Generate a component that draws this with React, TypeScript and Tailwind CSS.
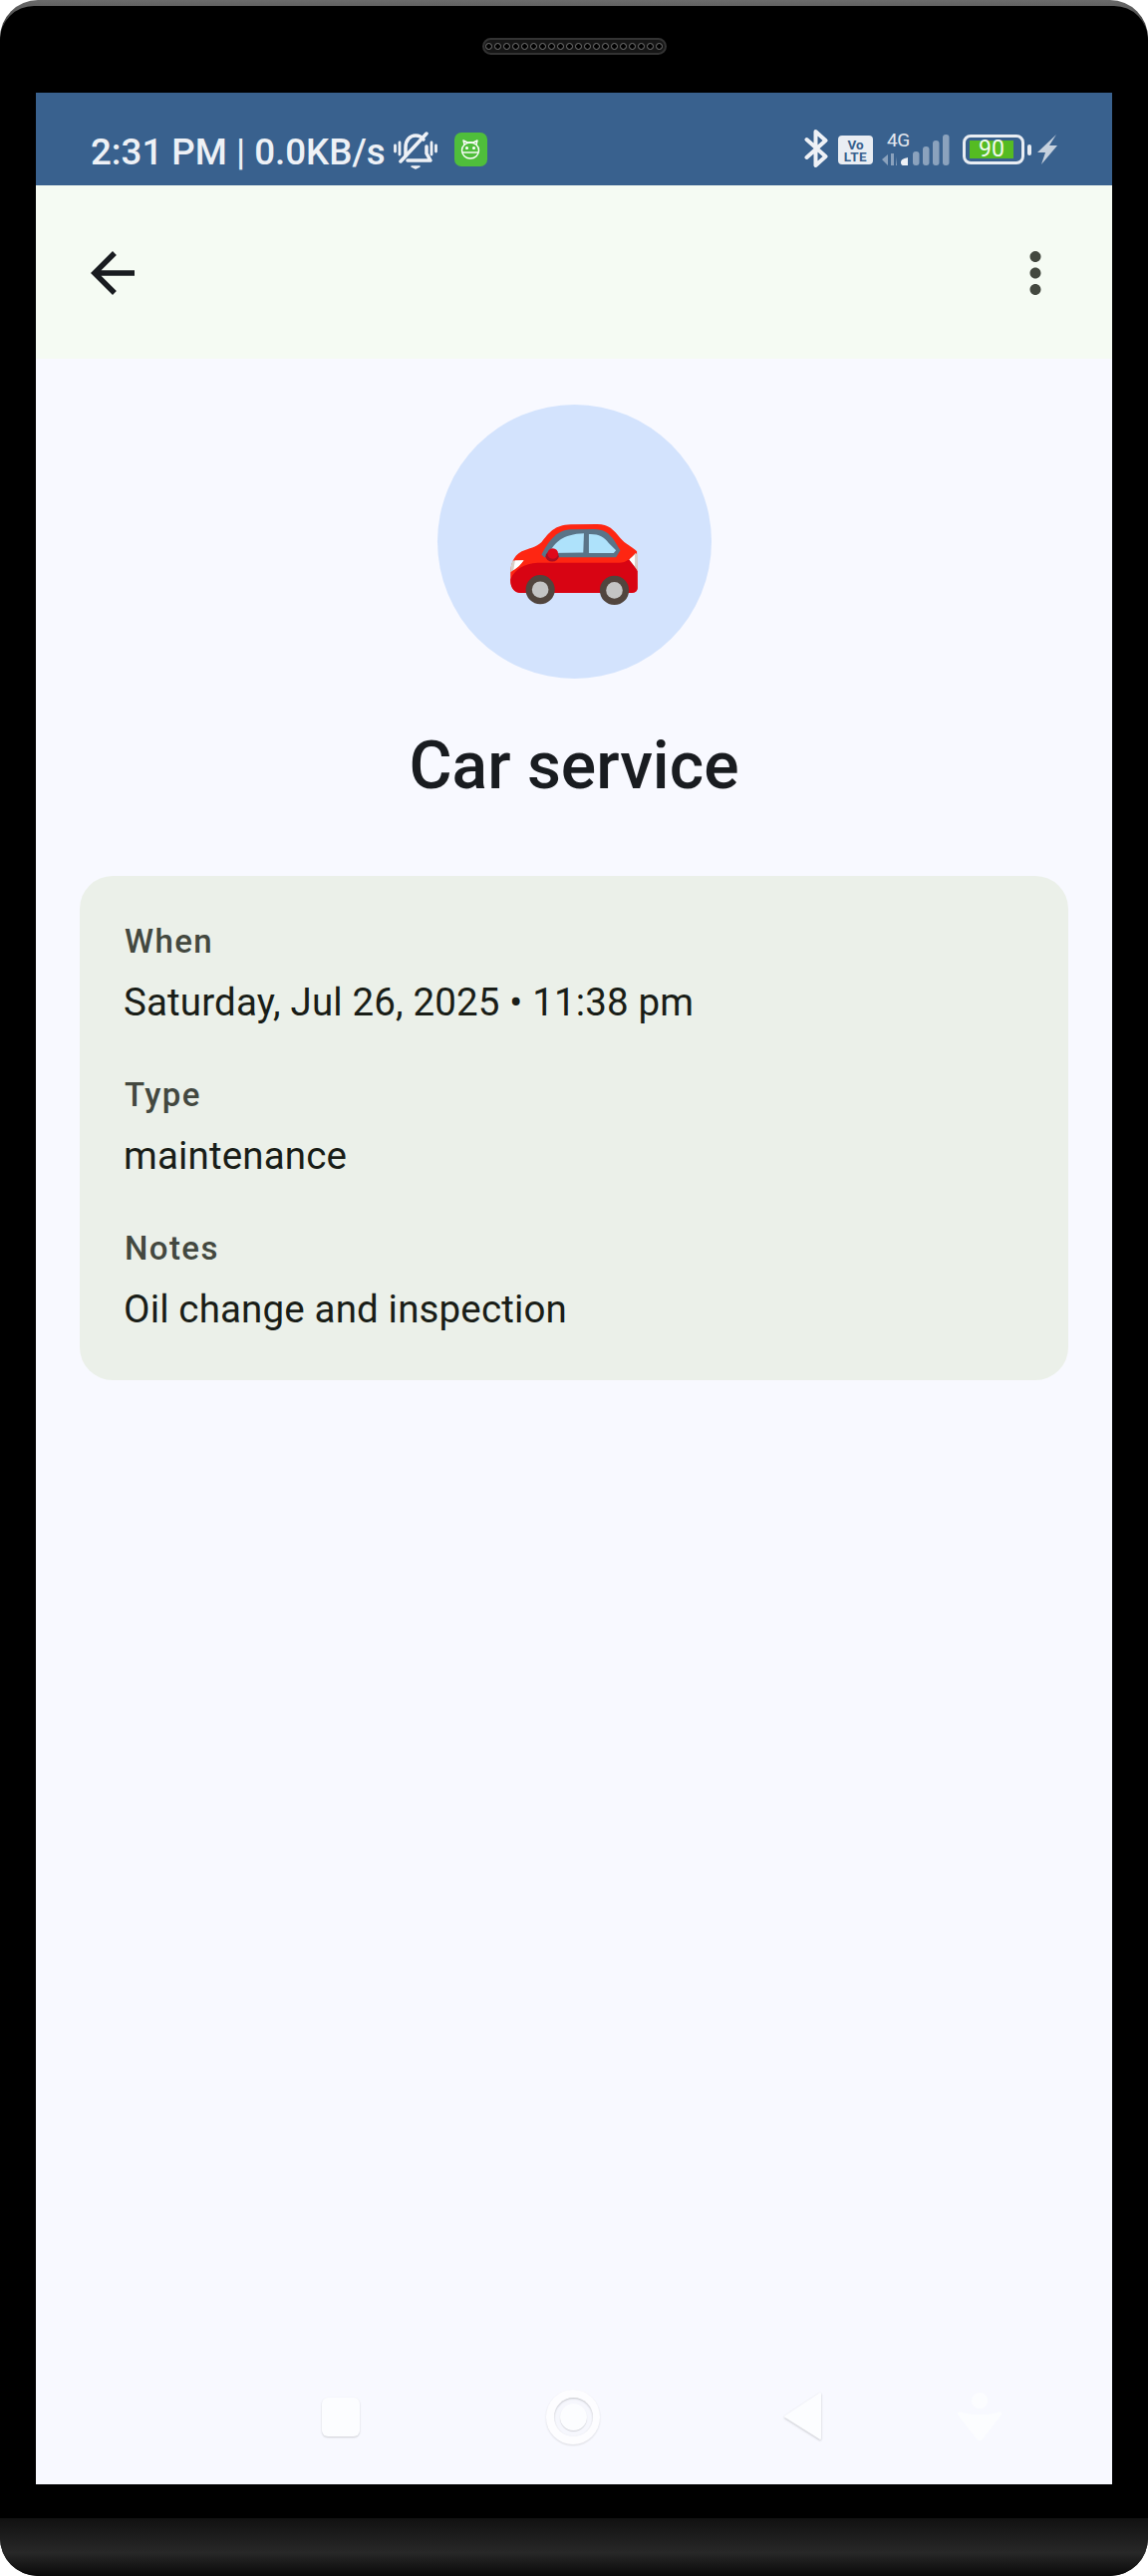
import React from 'react';

const Speaker = () => (
  <div className="flex h-[17px] w-[185px] items-center justify-center gap-[1.5px] rounded-full border-2 border-[#333] bg-[#161616]">
    {Array.from({ length: 20 }).map((_, i) => (
      <span key={i} className="h-[7.5px] w-[7.5px] rounded-full border border-[#777] bg-black" />
    ))}
  </div>
);

const MutedBell = () => (
  <svg width="44" height="38" viewBox="0 0 44 38" fill="none" stroke="#eef1f6" strokeLinecap="round" strokeLinejoin="round" className="mt-[2px]">
    <path d="M12 24 V16 C12 8 17 4 22 4 C25 4 28 5 30 8" strokeWidth="3.5" />
    <path d="M33 15 V22 L37 29 H14" strokeWidth="3.5" />
    <path d="M7 30 L33 2" strokeWidth="3.5" />
    <path d="M1.5 14 V20 M6 11 V23 M38 11 V23 M42.5 14 V20" strokeWidth="2.8" />
    <path d="M18 35 H26 L22 37 Z" fill="#eef1f6" strokeWidth="1.5" />
  </svg>
);

const AppBadge = () => (
  <div className="ml-[17px] mt-[3px] flex h-[34px] w-[33px] items-center justify-center rounded-[7px] bg-[#4fbe3b]">
    <svg width="20" height="22" viewBox="0 0 20 22" fill="none" stroke="#fff" strokeWidth="1.4">
      <path d="M4 6 L3 2 L7 4 H13 L17 2 L16 6" strokeLinejoin="round" />
      <ellipse cx="10" cy="12" rx="8.5" ry="8" />
      <path d="M2 14 H18" />
      <circle cx="6.5" cy="9.5" r="0.8" fill="#fff" />
      <circle cx="13.5" cy="9.5" r="0.8" fill="#fff" />
    </svg>
  </div>
);

const Bluetooth = () => (
  <svg width="24" height="38" viewBox="0 0 24 38" fill="none" stroke="#eef1f6" strokeWidth="4" strokeLinecap="round" strokeLinejoin="round">
    <path d="M2.5 10 L21.5 27 L11.5 36 V2 L21.5 11 L2.5 28" />
  </svg>
);

const VoLte = () => (
  <div className="ml-[10px] mt-[6px] flex h-[29px] w-[35px] flex-col items-center justify-center rounded-[4px] bg-[#e9edf3] text-[13.5px] font-bold leading-[12px] text-[#39618e]">
    <span>Vo</span>
    <span className="tracking-[0.5px]">LTE</span>
  </div>
);

const Signal = () => (
  <div className="relative ml-[9px] h-[38px] w-[70px]">
    <span className="absolute left-[5px] top-[0px] text-[19px] leading-[22px] tracking-[-0.5px] text-[#e3e8ef]">4G</span>
    <svg width="70" height="38" viewBox="0 0 70 38" fill="#eef1f6">
      <g opacity="0.45">
        <path d="M0 30 L6 25 V36 Z M9 24 H12 V36 H9 Z M14 27 L15 36 H14 Z" />
        <rect x="31" y="22" width="6.5" height="14" rx="3" />
        <rect x="41" y="17" width="6.5" height="19" rx="3" />
        <rect x="51" y="11" width="6.5" height="25" rx="3" />
        <rect x="61" y="5" width="6.5" height="31" rx="3" />
      </g>
      <path d="M19 33 C19 30 22 29 26 28 V36 H21 C20 36 19 35 19 33 Z" />
    </svg>
  </div>
);

const Battery = () => (
  <div className="ml-[11px] mt-[5px] flex items-center">
    <div className="flex h-[30px] w-[62px] items-center rounded-[8px] border-[3px] border-[#e9edf3] pl-[4px]">
      <div className="flex h-[18px] w-[44px] items-center justify-center bg-[#55bb22] text-[23px] leading-[18px] text-[#f2faef]">90</div>
    </div>
    <div className="ml-[3px] h-[11px] w-[4px] rounded-[2px] bg-[#e9edf3]" />
  </div>
);

const Bolt = () => (
  <svg width="20" height="30" viewBox="0 0 20 30" fill="#c6d1de" className="ml-[6px] mt-[5px]">
    <path d="M19 0 L0 18 H8 L4 30 L20 11 H12 Z" />
  </svg>
);

const CarEmoji = () => (
  <svg width="130" height="83" viewBox="335 405 390 250">
    <path fill="#fe2612" d="M338 560 C338 530 345 505 372 490 C395 480 415 478 432 462 C455 435 470 410 520 409 L600 408 C635 408 650 425 670 450 C685 468 705 475 720 490 L722 600 C722 612 712 616 700 616 L370 616 C350 616 338 600 338 580 Z" />
    <path fill="#d80413" d="M338 575 C350 545 380 527 420 525 L660 525 C680 525 690 520 698 512 L722 550 L722 600 C722 612 712 616 700 616 L370 616 C350 616 338 600 338 575 Z" />
    <path fill="#5a7488" d="M432 500 C450 465 475 425 520 424 L590 423 C620 423 635 435 650 455 L670 487 L657 508 L440 508 Z" />
    <path fill="#aee2fb" d="M455 495 C470 465 495 438 560 436 L558 494 Z" />
    <path fill="#aee2fb" d="M575 438 C605 437 620 445 635 465 L657 487 L650 495 L575 495 Z" />
    <ellipse cx="464" cy="505" rx="20" ry="16" fill="#a90c22" />
    <ellipse cx="466" cy="497" rx="16" ry="16" fill="#e0081a" />
    <path fill="#d8cfc8" d="M345 518 L378 517 C365 535 350 545 338 553 C338 540 340 528 345 518 Z" />
    <path fill="#fff" d="M352 518 L378 517 C368 532 358 540 347 547 Z" />
    <path fill="#d8cfc8" d="M716 495 L722 500 L722 548 L697 515 C703 508 710 503 716 495 Z" />
    <path fill="#fff" d="M714 500 V535 L697 515 Z" />
    <circle cx="428" cy="606" r="44" fill="#51453e" />
    <circle cx="428" cy="606" r="25" fill="#c4c4c4" />
    <circle cx="652" cy="608" r="44" fill="#51453e" />
    <circle cx="652" cy="608" r="25" fill="#c4c4c4" />
  </svg>
);

const Field = ({ label, value }: { label: string; value: string }) => (
  <div>
    <div className="h-[44px] pl-[1px] text-[33px] font-medium leading-[44px] tracking-[1.4px] text-[#43483f]">{label}</div>
    <div className="mt-[11px] h-[55px] text-[38.5px] leading-[56px] tracking-[0.15px] text-[#191d17]">{value}</div>
  </div>
);

const NavBar = () => (
  <div className="mb-[33px] flex h-[70px] items-center pl-[287px]">
    <div className="h-[39px] w-[38px] rounded-[6px] bg-[#fcfdff] shadow-[0_1px_2px_rgba(0,0,0,0.18)]" />
    <div className="ml-[187px] flex h-[55px] w-[54px] items-center justify-center rounded-full bg-[#fdfdff] shadow-[0_1px_2px_rgba(0,0,0,0.12)]">
      <div className="flex h-[39px] w-[39px] items-center justify-center rounded-full bg-[#f6f7fd] shadow-[inset_0_1px_2px_rgba(0,0,0,0.2)]">
        <div className="h-[27px] w-[27px] rounded-full bg-[#fcfdff] shadow-[0_1px_1px_rgba(0,0,0,0.15)]" />
      </div>
    </div>
    <svg width="38" height="48" viewBox="0 0 38 48" className="ml-[185px] drop-shadow-[0_1px_1px_rgba(0,0,0,0.2)]">
      <path d="M36 1 V46 L1 24 Z" fill="#fcfdff" stroke="#fcfdff" strokeLinejoin="round" strokeWidth="2" />
    </svg>
    <svg width="46" height="48" viewBox="0 0 46 48" className="ml-[135px]">
      <circle cx="23" cy="8" r="8" fill="#fcfdff" />
      <path d="M3 21 C12 25 34 25 43 21 L24 46 H22 Z" fill="#fcfdff" stroke="#fcfdff" strokeWidth="4" strokeLinejoin="round" />
    </svg>
  </div>
);

export default function App() {
  return (
    <div className="h-[2585px] w-[1152px] bg-white font-['Roboto',sans-serif]">
      <div className="flex h-full flex-col overflow-hidden rounded-[38px] bg-gradient-to-b from-[#6b6b6b] to-[#111] to-[60px]">
        {/* Device top */}
        <div className="mt-[6px] flex h-[87px] items-start justify-center rounded-t-[34px] bg-black pt-[32px]">
          <Speaker />
        </div>

        {/* Screen */}
        <div className="flex flex-1 bg-black px-[36px]">
          <div className="flex h-[2400px] w-[1080px] flex-col bg-[#f8f9ff]">
            {/* Status bar */}
            <div className="flex h-[93px] items-start justify-between bg-[#39618e] pl-[55px] pr-[55px] pt-[37px]">
              <div className="flex items-start">
                <span className="mr-[8px] h-[38px] pt-[3px] text-[36.7px] font-medium leading-[40px] text-[#eef1f6]">2:31 PM | 0.0KB/s</span>
                <MutedBell />
                <AppBadge />
              </div>
              <div className="flex items-start">
                <Bluetooth />
                <VoLte />
                <Signal />
                <Battery />
                <Bolt />
              </div>
            </div>

            {/* App bar */}
            <div className="flex h-[174px] items-start justify-between bg-[#f5fbf3] pl-[44px] pr-[44px] pt-[55px]">
              <svg width="66" height="66" viewBox="0 0 24 24" fill="#191c20">
                <path d="M20 11H7.83l5.59-5.59L12 4l-8 8 8 8 1.41-1.41L7.83 13H20v-2z" />
              </svg>
              <svg width="66" height="66" viewBox="0 0 24 24" fill="#43483f">
                <path d="M12 8c1.1 0 2-.9 2-2s-.9-2-2-2-2 .9-2 2 .9 2 2 2zm0 2c-1.1 0-2 .9-2 2s.9 2 2 2 2-.9 2-2-.9-2-2-2zm0 6c-1.1 0-2 .9-2 2s.9 2 2 2 2-.9 2-2-.9-2-2-2z" />
              </svg>
            </div>

            {/* Content */}
            <div className="flex flex-1 flex-col items-center px-[44px] pt-[46px]">
              <div className="flex h-[275px] w-[275px] items-center justify-center rounded-full bg-[#d3e3fd] pt-[45px]">
                <CarEmoji />
              </div>
              <h1 className="mt-[48px] h-[80px] text-[66px] font-medium leading-[80px] text-[#191c20]">Car service</h1>
              <div className="mt-[70px] flex w-full flex-col gap-[44px] rounded-[33px] bg-[#ebf0e9] p-[44px]">
                <Field label="When" value="Saturday, Jul 26, 2025 • 11:38 pm" />
                <Field label="Type" value="maintenance" />
                <Field label="Notes" value="Oil change and inspection" />
              </div>
            </div>

            <NavBar />
          </div>
        </div>

        {/* Device bottom */}
        <div className="h-[34px] shrink-0 bg-black" />
        <div className="h-[58px] shrink-0 bg-gradient-to-b from-[#111] via-[#282828] via-[60%] to-[#0a0a0a]" />
      </div>
    </div>
  );
}
